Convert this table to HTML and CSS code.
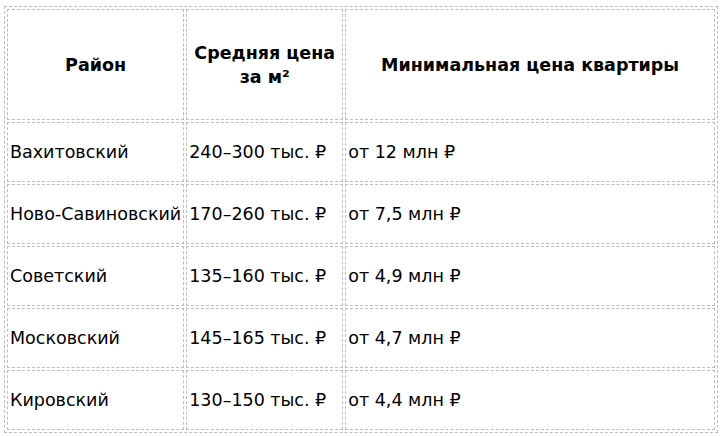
FILE: index.html
```html
<!DOCTYPE html>
<html lang="ru">
<head>
<meta charset="utf-8">
<link rel="stylesheet" href="styles.css">
</head>
<body>
<div class="wrap">
<table class="prices">
  <thead>
    <tr class="head-row">
      <th class="c1">Район</th>
      <th class="c2">Средняя цена<br>за м²</th>
      <th class="c3">Минимальная цена квартиры</th>
    </tr>
  </thead>
  <tbody>
    <tr><td>Вахитовский</td><td>240–300 тыс. ₽</td><td>от 12 млн ₽</td></tr>
    <tr><td>Ново-Савиновский</td><td>170–260 тыс. ₽</td><td>от 7,5 млн ₽</td></tr>
    <tr><td>Советский</td><td>135–160 тыс. ₽</td><td>от 4,9 млн ₽</td></tr>
    <tr><td>Московский</td><td>145–165 тыс. ₽</td><td>от 4,7 млн ₽</td></tr>
    <tr><td>Кировский</td><td>130–150 тыс. ₽</td><td>от 4,4 млн ₽</td></tr>
  </tbody>
</table>
</div>
</body>
</html>
```
FILE: styles.css
```css
html, body {
  margin: 0;
  padding: 0;
  background: #fff;
}
.wrap {
  padding: 6px 3px 0 4px;
}
.prices {
  width: 714px;
  border: 1px dashed #bdbdbd;
  border-collapse: separate;
  border-spacing: 2px;
  font-family: "DejaVu Sans", Verdana, sans-serif;
  font-size: 17.5px;
  color: #000;
}
.prices th,
.prices td {
  border: 1px dashed #bdbdbd;
  padding: 2px;
}
.prices .c1 { width: 171px; }
.prices .c2 { width: 157px; }
.prices th {
  font-weight: bold;
  text-align: center;
  height: 111px;
  line-height: 24px;
  box-sizing: border-box;
}
.prices td {
  text-align: left;
  height: 60px;
  line-height: 21px;
  box-sizing: border-box;
  white-space: nowrap;
}
```
